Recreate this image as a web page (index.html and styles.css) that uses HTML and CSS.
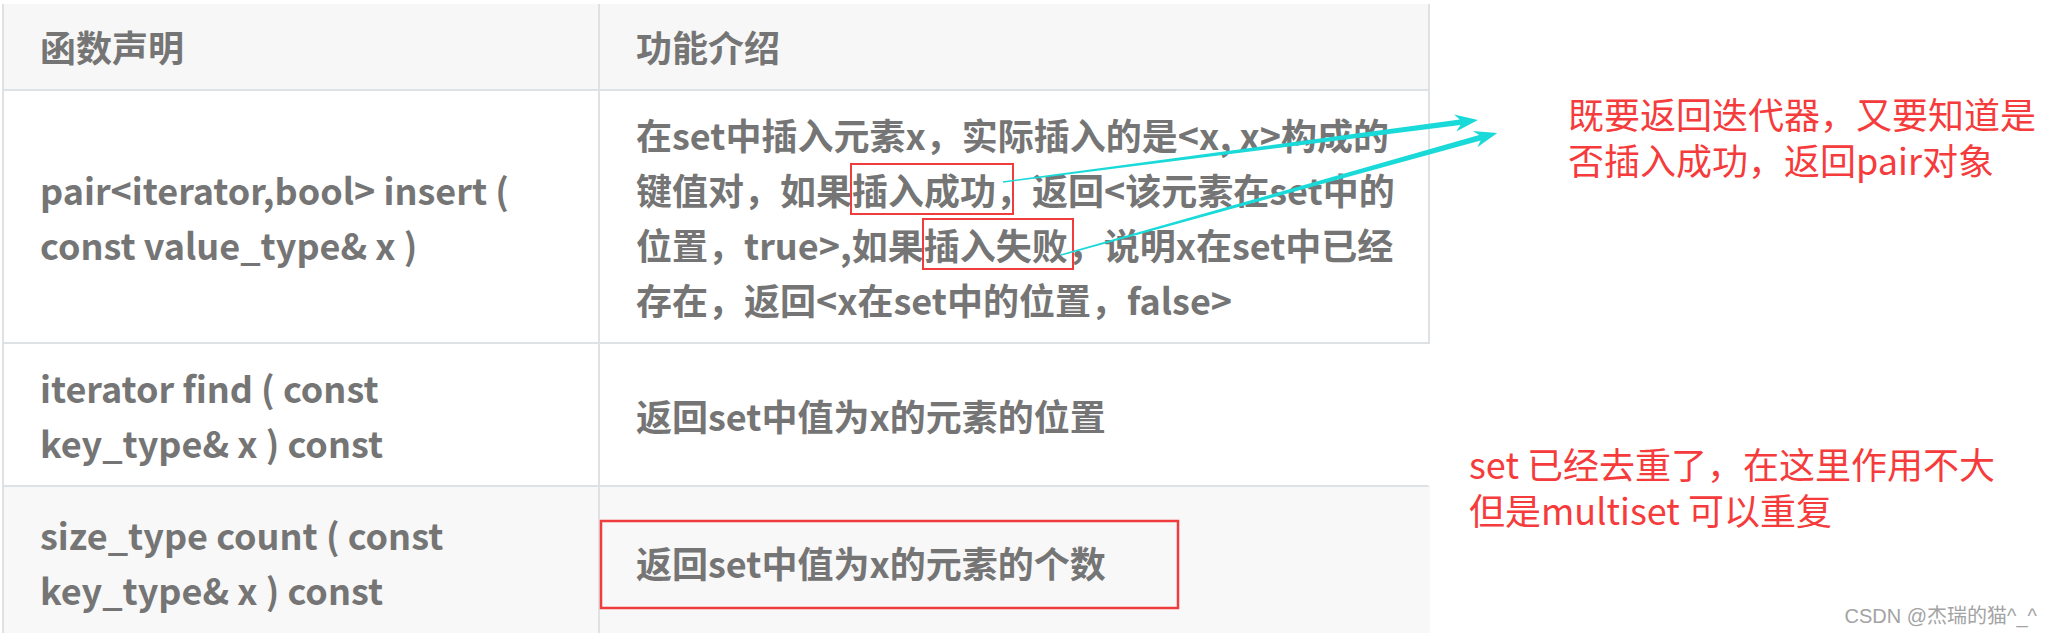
FILE: index.html
```html
<!DOCTYPE html>
<html>
<head>
  <meta charset="utf-8">
  <title>set 接口说明</title>
  <link rel="stylesheet" href="styles.css">
</head>
<body>
  <div class="page">
    <table class="api-table">
      <thead>
        <tr>
          <th class="decl">函数声明</th>
          <th>功能介绍</th>
        </tr>
      </thead>
      <tbody>
        <tr>
          <td>pair&lt;iterator,bool&gt; insert (<br>const value_type&amp; x )</td>
          <td>在set中插入元素x，实际插入的是&lt;x, x&gt;构成的<br>键值对，如果<span class="mark wide">插入成功</span>，返回&lt;该元素在set中的<br>位置，true&gt;,如果<span class="mark">插入失败</span>，说明x在set中已经<br>存在，返回&lt;x在set中的位置，false&gt;</td>
        </tr>
        <tr class="open">
          <td>iterator find ( const<br>key_type&amp; x ) const</td>
          <td>返回set中值为x的元素的位置</td>
        </tr>
        <tr class="open alt">
          <td>size_type count ( const<br>key_type&amp; x ) const</td>
          <td>返回set中值为x的元素的个数</td>
        </tr>
      </tbody>
    </table>

    <aside class="notes">
      <p class="note note-insert">既要返回迭代器，又要知道是<br>否插入成功，返回pair对象</p>
      <p class="note note-count">set 已经去重了，在这里作用不大<br>但是multiset 可以重复</p>
    </aside>

    <!-- annotations drawn over the table -->
    <svg class="marks" width="2054" height="633" viewBox="0 0 2054 633">
      <rect x="601" y="521" width="577" height="87" fill="none" stroke="#f03c3c" stroke-width="2.5"/>
      <g fill="#19d9d9">
        <polygon transform="translate(1003 182) rotate(-7.44)" points="0,-0.7 461,-2.8 456,-8.5 479,0 456,8.5 461,2.8 0,0.7"/>
        <polygon transform="translate(1061 255) rotate(-15.63)" points="0,-0.7 435,-2.8 430,-8.5 453,0 430,8.5 435,2.8 0,0.7"/>
      </g>
    </svg>

    <span class="watermark">CSDN @杰瑞的猫^_^</span>
  </div>
</body>
</html>
```

FILE: styles.css
```css
body {
  margin: 0;
  background: #fff;
}

.page {
  position: relative;
  display: flex;
  align-items: flex-start;
  width: 2054px;
  height: 633px;
  overflow: hidden;
  font-family: "Noto Sans CJK SC", sans-serif;
}

.api-table {
  flex: none;
  width: 1428px;
  margin: 4px 0 0 2px;
  border-collapse: separate;
  border-spacing: 0;
  table-layout: fixed;
  color: #757575;
  font-size: 36px;
  font-weight: 700;
  line-height: 55px;
}

.api-table th,
.api-table td {
  box-sizing: border-box;
  padding: 16px 36px 15px;
  border-right: 2px solid #dfe2e5;
  border-bottom: 2px solid #dfe2e5;
  text-align: left;
  vertical-align: middle;
  white-space: nowrap;
}

.api-table th:first-child,
.api-table td:first-child {
  border-left: 2px solid #dfe2e5;
}

.api-table th {
  padding: 15px 36px;
  background-color: #f7f7f7;
}

.api-table th.decl {
  width: 598px;
}

/* the lower rows were cut off on the right */
.api-table tr.open td:last-child {
  border-right-color: transparent;
}

.api-table tr.alt td {
  padding: 20px 36px;
  background-color: #f8f8f8;
}

.mark {
  padding: 0 6px 0 2px;
  margin: 0 -6px 0 -2px;
  outline: 2px solid #f03c3c;
  outline-offset: -2px;
}

.mark.wide {
  padding-right: 18px;
  margin-right: -18px;
}

.notes {
  display: flex;
  flex-direction: column;
}

.note {
  margin: 0;
  color: #f53b3b;
  font-size: 36px;
  font-weight: 400;
  line-height: 46px;
  white-space: nowrap;
}

.note-insert {
  margin: 90px 0 0 138px;
}

.note-count {
  margin: 258px 0 0 39px;
}

.marks {
  position: absolute;
  top: 0;
  left: 0;
  pointer-events: none;
}

.watermark {
  position: absolute;
  right: 17px;
  bottom: 5px;
  color: #a3a3a3;
  font-family: "Liberation Sans", "Noto Sans CJK SC", sans-serif;
  font-size: 20px;
  line-height: 24px;
}
```
